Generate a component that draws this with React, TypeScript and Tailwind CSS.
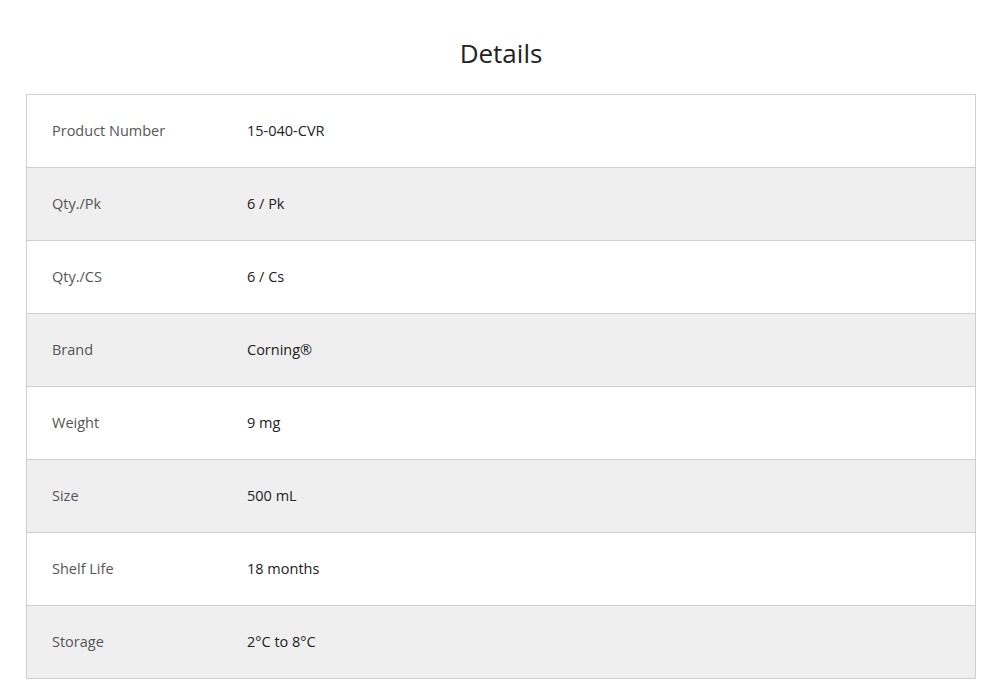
const rows: [string, string][] = [
  ["Product Number", "15-040-CVR"],
  ["Qty./Pk", "6 / Pk"],
  ["Qty./CS", "6 / Cs"],
  ["Brand", "Corning®"],
  ["Weight", "9 mg"],
  ["Size", "500 mL"],
  ["Shelf Life", "18 months"],
  ["Storage", "2°C to 8°C"],
];

export default function App() {
  return (
    <main className="min-h-screen bg-white font-['Open_Sans',sans-serif] text-[#222]">
      <div className="ml-[26px] w-[950px] pt-[35px]">
        <h2 className="text-center text-[26px] leading-[36px] text-[#222]">Details</h2>
        <div className="mt-[23px] border border-[#cfcfcf]">
          {rows.map(([label, value], i) => (
            <div
              key={label}
              className={`flex items-center text-[14.5px] ${
                i < rows.length - 1 ? "h-[73px] border-b border-[#cfcfcf]" : "h-[72px]"
              } ${i % 2 === 1 ? "bg-[#efefef]" : "bg-white"}`}
            >
              <div className="w-[220px] pl-[25px] text-[#555]">{label}</div>
              <div className="text-[#222]">{value}</div>
            </div>
          ))}
        </div>
      </div>
    </main>
  );
}
